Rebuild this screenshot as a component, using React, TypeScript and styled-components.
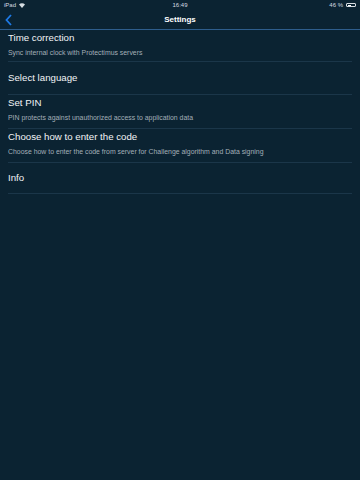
import React from "react";
import styled, { createGlobalStyle } from "styled-components";

const Global = createGlobalStyle`
  html, body { margin: 0; padding: 0; background: #0b2332; }
  body { font-family: "Liberation Sans", Arial, sans-serif; }
`;

const Page = styled.div`
  width: 360px;
  height: 480px;
  background: #0b2332;
  color: #ffffff;
  display: flex;
  flex-direction: column;
  overflow: hidden;
`;

const StatusBar = styled.div`
  height: 10px;
  display: grid;
  grid-template-columns: 1fr auto 1fr;
  align-items: center;
  padding: 0 4px;
  font-size: 6px;
  color: #d6dde2;
`;

const StatusLeft = styled.div`
  display: flex;
  align-items: center;
  gap: 3px;
`;

const StatusRight = styled.div`
  display: flex;
  justify-content: flex-end;
  align-items: center;
  gap: 3px;
`;

const Battery = styled.div`
  width: 10px;
  height: 4px;
  border: 1px solid #d6dde2;
  border-radius: 1px;
  display: flex;
  padding: 0.5px;
  box-sizing: border-box;
  &::before {
    content: "";
    width: 45%;
    background: #fff;
  }
`;

const NavBar = styled.div`
  height: 19px;
  display: grid;
  grid-template-columns: 40px 1fr 40px;
  align-items: center;
  border-bottom: 1px solid #2e5d8c;
`;

const Back = styled.div`
  padding-left: 5px;
  display: flex;
  align-items: center;
`;

const Title = styled.div`
  text-align: center;
  font-size: 8px;
  font-weight: bold;
  color: #ffffff;
`;

const List = styled.div`
  display: flex;
  flex-direction: column;
  padding: 0 8px;
`;

const Row = styled.div<{ $h: number; $sub: boolean }>`
  height: ${(p) => p.$h}px;
  display: flex;
  flex-direction: column;
  justify-content: ${(p) => (p.$sub ? "flex-start" : "center")};
  padding-top: ${(p) => (p.$sub ? "2px" : "0")};
  gap: 5px;
  border-bottom: 1px solid #1b3649;
  box-sizing: border-box;
`;

const RowTitle = styled.div`
  font-size: 9.7px;
  color: #f2f4f6;
  line-height: 12px;
`;

const RowSub = styled.div`
  font-size: 6.9px;
  color: #a3afb8;
  line-height: 8px;
`;

const rows = [
  { t: "Time correction", s: "Sync internal clock with Protectimus servers", h: 32 },
  { t: "Select language", h: 33 },
  { t: "Set PIN", s: "PIN protects against unauthorized access to application data", h: 34 },
  { t: "Choose how to enter the code", s: "Choose how to enter the code from server for Challenge algorithm and Data signing", h: 34 },
  { t: "Info", h: 31 },
];

export default function App() {
  return (
    <Page>
      <Global />
      <StatusBar>
        <StatusLeft>
          <span>iPad</span>
          <svg width="6" height="5" viewBox="0 0 6 5">
            <path d="M0 1.5 A4 4 0 0 1 6 1.5 L3 5 Z" fill="#d6dde2" />
          </svg>
        </StatusLeft>
        <span>16:49</span>
        <StatusRight>
          <span>46 %</span>
          <Battery />
        </StatusRight>
      </StatusBar>
      <NavBar>
        <Back>
          <svg width="7" height="12" viewBox="0 0 7 12">
            <path d="M6 1 L1.5 6 L6 11" stroke="#1e7ae6" strokeWidth="1.8" fill="none" />
          </svg>
        </Back>
        <Title>Settings</Title>
        <div />
      </NavBar>
      <List>
        {rows.map((r) => (
          <Row key={r.t} $h={r.h} $sub={!!r.s}>
            <RowTitle>{r.t}</RowTitle>
            {r.s && <RowSub>{r.s}</RowSub>}
          </Row>
        ))}
      </List>
    </Page>
  );
}
